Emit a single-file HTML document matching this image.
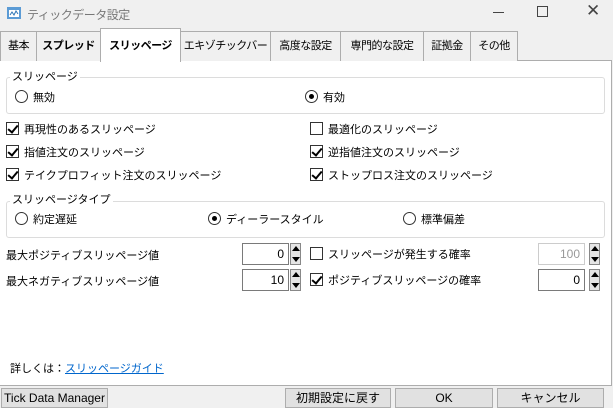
<!DOCTYPE html>
<html><head><meta charset="utf-8"><style>
*{margin:0;padding:0;box-sizing:border-box}
body{width:613px;height:408px;background:#f0f0f0;font-family:"Liberation Sans","Noto Sans CJK JP",sans-serif;font-size:11px;color:#000;position:relative;overflow:hidden}
.a{position:absolute;white-space:nowrap}
.tab{position:absolute;top:31px;height:30px;background:#f0f0f0;border:1px solid #adadad;border-bottom:none;font-size:11px;line-height:28px;text-align:center;white-space:nowrap;letter-spacing:-0.5px}
.cb{position:absolute;width:13px;height:13px;border:1px solid #333;background:#fff}
.cb.on::after{content:"";position:absolute;left:3px;top:0px;width:4px;height:8px;border:solid #000;border-width:0 2px 2px 0;transform:rotate(40deg)}
.rd{position:absolute;width:13px;height:13px;border:1px solid #333;border-radius:50%;background:#fff}
.rd.on::after{content:"";position:absolute;left:3px;top:3px;width:5px;height:5px;border-radius:50%;background:#000}
.grp{position:absolute;border:1px solid #dcdcdc;border-radius:3px}
.gl{position:absolute;background:#fff;padding:0 2px;font-size:11px;line-height:14px;white-space:nowrap}
.spin{position:absolute;width:47px;height:22px;border:1px solid #7a7a7a;background:#fff;text-align:right;padding-right:4px;line-height:20px;font-size:12px}
.arr{position:absolute;width:11px;height:22px;background:#e5e5e5;border:1px solid #888}
.arr::before{content:"";position:absolute;left:1px;top:2px;border:4px solid transparent;border-bottom:5px solid #000;border-top:none}
.arr::after{content:"";position:absolute;left:1px;bottom:2px;border:4px solid transparent;border-top:5px solid #000;border-bottom:none}
.btn{position:absolute;top:388px;height:20px;background:#e1e1e1;border:1px solid #adadad;text-align:center;line-height:18px;font-size:12px;white-space:nowrap}
</style></head><body>
<div class="a" style="left:0;top:0;width:613px;height:28px;background:#f0f0f0"></div>
<svg class="a" style="left:6px;top:5px" width="16" height="16"><rect x="1" y="2" width="14" height="12" fill="#5b9bd5"/><rect x="3" y="5" width="10" height="7" fill="#fff"/><path d="M4 10 L6 7 L8 10 L10 6 L12 9" stroke="#2e75b6" fill="none"/></svg>
<div class="a" style="left:27px;top:6px;color:#777;font-size:12px;letter-spacing:-0.5px">ティックデータ設定</div>
<div class="a" style="left:493px;top:12px;width:11px;height:1px;background:#444"></div>
<div class="a" style="left:537px;top:6px;width:11px;height:11px;border:1px solid #444"></div>
<div class="a" style="left:586px;top:1px;font-size:17px;color:#444">✕</div>

<div class="a" style="left:0;top:60px;width:612px;height:326px;background:#fff;border-top:1px solid #adadad;border-right:1px solid #adadad;border-bottom:1px solid #adadad"></div>
<div class="tab" style="left:0;width:37px">基本</div>
<div class="tab" style="left:36px;width:65px;font-weight:bold">スプレッド</div>
<div class="tab" style="left:180px;width:91px">エキゾチックバー</div>
<div class="tab" style="left:270px;width:71px">高度な設定</div>
<div class="tab" style="left:340px;width:84px">専門的な設定</div>
<div class="tab" style="left:423px;width:48px">証拠金</div>
<div class="tab" style="left:470px;width:48px">その他</div>
<div class="tab" style="left:100px;top:28px;height:34px;width:81px;background:#fff;font-weight:bold;line-height:34px">スリッページ</div>

<div class="grp" style="left:6px;top:77px;width:599px;height:37px"></div>
<div class="gl" style="left:10px;top:70px">スリッページ</div>
<div class="rd" style="left:15px;top:90px"></div><div class="a" style="left:33px;top:89px">無効</div>
<div class="rd on" style="left:305px;top:90px"></div><div class="a" style="left:323px;top:89px">有効</div>

<div class="cb on" style="left:6px;top:122px"></div><div class="a" style="left:24px;top:121px">再現性のあるスリッページ</div>
<div class="cb" style="left:310px;top:122px"></div><div class="a" style="left:328px;top:121px">最適化のスリッページ</div>
<div class="cb on" style="left:6px;top:145px"></div><div class="a" style="left:24px;top:144px">指値注文のスリッページ</div>
<div class="cb on" style="left:310px;top:145px"></div><div class="a" style="left:328px;top:144px">逆指値注文のスリッページ</div>
<div class="cb on" style="left:6px;top:168px"></div><div class="a" style="left:24px;top:167px">テイクプロフィット注文のスリッページ</div>
<div class="cb on" style="left:310px;top:168px"></div><div class="a" style="left:328px;top:167px">ストップロス注文のスリッページ</div>

<div class="grp" style="left:6px;top:201px;width:599px;height:37px"></div>
<div class="gl" style="left:10px;top:193px">スリッページタイプ</div>
<div class="rd" style="left:15px;top:212px"></div><div class="a" style="left:33px;top:211px">約定遅延</div>
<div class="rd on" style="left:208px;top:212px"></div><div class="a" style="left:226px;top:211px">ディーラースタイル</div>
<div class="rd" style="left:403px;top:212px"></div><div class="a" style="left:421px;top:211px">標準偏差</div>

<div class="a" style="left:6px;top:247px">最大ポジティブスリッページ値</div>
<div class="spin" style="left:242px;top:243px">0</div><div class="arr" style="left:290px;top:243px"></div>
<div class="cb" style="left:310px;top:247px"></div><div class="a" style="left:328px;top:246px">スリッページが発生する確率</div>
<div class="spin" style="left:538px;top:243px;border-color:#ccc;color:#999">100</div><div class="arr" style="left:589px;top:243px"></div>

<div class="a" style="left:6px;top:273px">最大ネガティブスリッページ値</div>
<div class="spin" style="left:242px;top:269px">10</div><div class="arr" style="left:290px;top:269px"></div>
<div class="cb on" style="left:310px;top:273px"></div><div class="a" style="left:328px;top:272px">ポジティブスリッページの確率</div>
<div class="spin" style="left:538px;top:269px">0</div><div class="arr" style="left:589px;top:269px"></div>

<div class="a" style="left:10px;top:360px">詳しくは：</div>
<div class="a" style="left:65px;top:360px;color:#0066cc;text-decoration:underline">スリッページガイド</div>

<div class="btn" style="left:1px;width:107px">Tick Data Manager</div>
<div class="btn" style="left:285px;width:106px">初期設定に戻す</div>
<div class="btn" style="left:395px;width:98px">OK</div>
<div class="btn" style="left:497px;width:107px">キャンセル</div>
</body></html>
